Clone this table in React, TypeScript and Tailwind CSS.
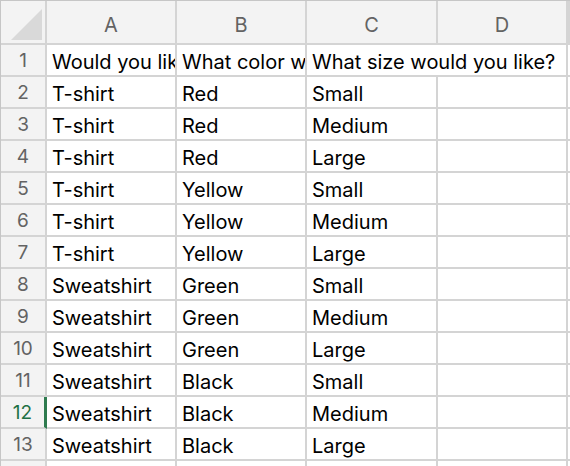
import React from "react";

const rows: string[][] = [
  ["Would you like", "What color would you like?", "What size would you like?", ""],
  ["T-shirt", "Red", "Small", ""],
  ["T-shirt", "Red", "Medium", ""],
  ["T-shirt", "Red", "Large", ""],
  ["T-shirt", "Yellow", "Small", ""],
  ["T-shirt", "Yellow", "Medium", ""],
  ["T-shirt", "Yellow", "Large", ""],
  ["Sweatshirt", "Green", "Small", ""],
  ["Sweatshirt", "Green", "Medium", ""],
  ["Sweatshirt", "Green", "Large", ""],
  ["Sweatshirt", "Black", "Small", ""],
  ["Sweatshirt", "Black", "Medium", ""],
  ["Sweatshirt", "Black", "Large", ""],
];

const font = { fontFamily: "Inter, 'Liberation Sans', sans-serif" };

export default function App() {
  return (
    <div
      className="w-[570px] h-[466px] overflow-hidden bg-white border-t border-l border-[#c6c6c6]"
      style={font}
    >
      <div className="grid grid-cols-[46px_130px_130px_131px_130px_1fr] grid-rows-[44px_repeat(14,32px)]">
        {/* header row */}
        <div className="relative bg-[#f3f3f3] border-r-2 border-b-2 border-[#d4d4d4]">
          <div className="absolute right-[3px] bottom-[3px] w-0 h-0 border-l-[31px] border-l-transparent border-b-[31px] border-b-[#d9d9d9]" />
        </div>
        {["A", "B", "C", "D", ""].map((c, i) => (
          <div
            key={i}
            className="bg-[#f3f3f3] border-r-2 border-b-2 border-[#d4d4d4] flex items-center justify-center pt-[5px] text-[20px] text-[#636363]"
          >
            {c}
          </div>
        ))}
        {rows.map((r, ri) => {
          const active = ri === 11;
          return (
            <React.Fragment key={ri}>
              <div
                className={
                  "bg-[#f3f3f3] border-b-2 border-[#d4d4d4] flex items-center justify-center pt-[3px] text-[19px] " +
                  (active
                    ? "text-[#1f7145] border-r-[3px] border-r-[#2f7b4f]"
                    : "text-[#636363] border-r-2")
                }
              >
                {ri + 1}
              </div>
              {r.map((t, ci) => {
                const overflowC = ri === 0 && ci === 2;
                return (
                  <div
                    key={ci}
                    className={
                      "relative bg-white border-b-2 border-[#d4d4d4] flex items-center pl-[5px] pt-[4px] text-[20px] text-black whitespace-nowrap " +
                      (overflowC
                        ? "border-r-0 overflow-visible z-10"
                        : "border-r-2 overflow-hidden")
                    }
                  >
                    {t}
                  </div>
                );
              })}
              <div className="bg-white border-b-2 border-[#d4d4d4]" />
            </React.Fragment>
          );
        })}
        <div className="bg-[#f3f3f3] border-r-2 border-[#d4d4d4]" />
        <div className="bg-white border-r-2 border-[#d4d4d4]" />
        <div className="bg-white border-r-2 border-[#d4d4d4]" />
        <div className="bg-white border-r-2 border-[#d4d4d4]" />
        <div className="bg-white border-r-2 border-[#d4d4d4]" />
        <div className="bg-white" />
      </div>
    </div>
  );
}
